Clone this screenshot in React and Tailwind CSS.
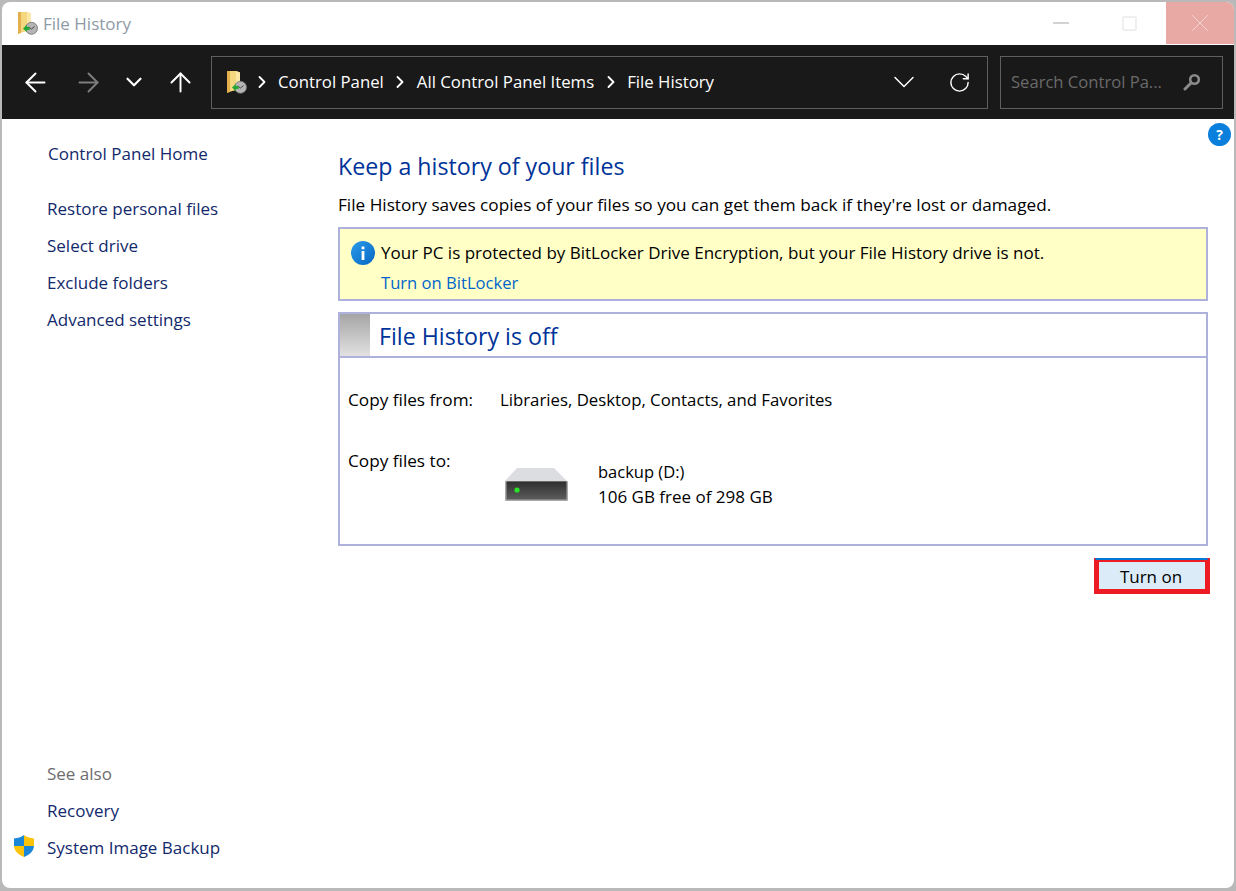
import { ArrowLeft, ArrowRight, ArrowUp, ChevronDown, ChevronRight, RotateCw, Minus, X } from "lucide-react"

const sidebarTasks = ["Restore personal files", "Select drive", "Exclude folders", "Advanced settings"]

function HistoryIcon({ className }) {
  return (
    <svg viewBox="0 0 20 23" className={className}>
      <path d="M0 0h9l4 1.500V18L0 21.500z" fill="#f5d77f" />
      <path d="M0 0h3v21l-3 1z" fill="#e3b04b" />
      <path d="M9 0l4 1.500V12H9z" fill="#fbe7a6" />
      <circle cx="13.500" cy="16.300" r="6" fill="#b4b4b4" stroke="#6e6e6e" strokeWidth="0.800" />
      <path d="M10.500 15l3 2 3-2.500" fill="none" stroke="#3a3a3a" strokeWidth="0.900" />
      <path d="M5 16.500l3.800-3.500v2h2.700v3H8.800v2z" fill="#22a834" />
    </svg>
  )
}

function InfoIcon() {
  return (
    <svg viewBox="0 0 24 24" className="h-6 w-6 shrink-0">
      <defs>
        <linearGradient id="infoBlue" x1="0" y1="0" x2="1" y2="1">
          <stop offset="0" stopColor="#2a9be8" />
          <stop offset="1" stopColor="#0667c4" />
        </linearGradient>
      </defs>
      <circle cx="12" cy="12" r="12" fill="url(#infoBlue)" />
      <rect x="10.600" y="10" width="2.800" height="9" fill="#fff" />
      <rect x="10.600" y="5.500" width="2.800" height="2.800" fill="#fff" />
    </svg>
  )
}

function DriveIcon() {
  return (
    <svg viewBox="0 0 63 33" className="h-[33px] w-[63px]">
      <defs>
        <linearGradient id="driveFace" x1="0" y1="0" x2="0" y2="1">
          <stop offset="0" stopColor="#2f2f2f" />
          <stop offset="1" stopColor="#5c5c5c" />
        </linearGradient>
      </defs>
      <path d="M12 0h37l13 13H0z" fill="#dcdde0" />
      <rect x="0" y="13" width="63" height="20" rx="1" fill="#a8a8a8" />
      <rect x="1.500" y="13.500" width="60" height="18" fill="url(#driveFace)" />
      <circle cx="12" cy="22" r="2.600" fill="#28e428" />
    </svg>
  )
}

function ShieldIcon() {
  return (
    <svg viewBox="0 0 24 24" className="h-6 w-6 shrink-0">
      <path d="M12 1c3 2.200 6 3.200 10 3.400V12H12z" fill="#fcc30b" />
      <path d="M12 1C9 3.200 6 4.200 2 4.400V12h10z" fill="#1a87d8" />
      <path d="M2 12c.4 5 4 8.800 10 11V12z" fill="#fcc30b" />
      <path d="M22 12c-.4 5-4 8.800-10 11V12z" fill="#1a87d8" />
    </svg>
  )
}

function SearchGlyph() {
  return (
    <svg viewBox="0 0 18 18" className="h-[18px] w-[18px]">
      <circle cx="11.500" cy="6.500" r="4.300" fill="none" stroke="#8a8a8a" strokeWidth="2.600" />
      <path d="M8 10l-6 6" stroke="#8a8a8a" strokeWidth="3" strokeLinecap="round" />
    </svg>
  )
}

function Sep() {
  return <ChevronRight className="mx-[6.500px] h-[20px] w-[20px] shrink-0" strokeWidth={2.200} />
}

export default function App() {
  return (
    <div
      className="h-[891px] w-[1236px] overflow-hidden bg-[#b9b9b9] pt-[2px] pr-[2px] pb-[3px] pl-[2px] text-[17px] text-black"
      style={{ fontFamily: '"Open Sans", "Noto Sans", "Liberation Sans", sans-serif' }}
    >
      <div className="flex h-full flex-col overflow-hidden rounded-[8px] bg-white">
        {/* title bar */}
        <div className="flex h-[43px] shrink-0 items-center">
          <HistoryIcon className="ml-[16px] h-[23px] w-[20px]" />
          <span className="ml-[5px] text-[17px] text-[#8f9aa6]">File History</span>
          <div className="ml-auto flex h-full items-start">
            <div className="flex h-[42px] w-[68px] items-center justify-center">
              <Minus className="h-[26px] w-[26px] text-[#a8a8a8]" strokeWidth={1} />
            </div>
            <div className="mr-[3px] flex h-[42px] w-[68px] items-center justify-center">
              <div className="h-[15px] w-[15px] rounded-[2px] border-2 border-[#efefef]" />
            </div>
            <div className="flex h-[42px] w-[68px] items-center justify-center bg-[#e8a8a4]">
              <X className="h-[30px] w-[30px] text-[#f4d5d2]" strokeWidth={0.800} />
            </div>
          </div>
        </div>

        {/* nav toolbar */}
        <div className="flex h-[74px] shrink-0 items-center bg-[#191919] pr-[11px] text-white">
          <ArrowLeft className="ml-[18px] h-[31px] w-[31px]" strokeWidth={1.500} />
          <ArrowRight className="ml-[22px] h-[31px] w-[31px] text-[#7d7d7d]" strokeWidth={1.500} />
          <ChevronDown className="ml-[17px] h-[26px] w-[26px]" strokeWidth={2} />
          <ArrowUp className="ml-[18px] h-[31px] w-[31px]" strokeWidth={1.500} />
          <div className="ml-[15px] flex h-[53px] w-[777px] items-center border border-[#5f5f5f] pl-[15px] pr-[16px]">
            <HistoryIcon className="h-[23px] w-[20px]" />
            <ChevronRight className="ml-[5px] mr-[6px] h-[20px] w-[20px] shrink-0" strokeWidth={2.200} />
            <span className="text-[16.800px]">Control Panel</span>
            <Sep />
            <span className="text-[16.800px]">All Control Panel Items</span>
            <Sep />
            <span className="text-[16.800px]">File History</span>
            <ChevronDown className="ml-auto h-[36px] w-[36px]" strokeWidth={1} />
            <RotateCw className="ml-[26px] h-[23px] w-[23px]" strokeWidth={1.500} />
          </div>
          <div className="ml-[12px] flex h-[53px] flex-1 items-center justify-between border border-[#5f5f5f] pl-[10px] pr-[21px]">
            <span className="text-[16.600px] text-[#6a6a6a]">Search Control Pa...</span>
            <SearchGlyph />
          </div>
        </div>

        {/* body */}
        <div className="relative flex min-h-0 flex-1">
          <button className="absolute right-[3px] top-[4px] flex h-[23px] w-[23px] items-center justify-center rounded-full bg-[#0a7fdb] text-[14px] font-bold leading-none text-white">
            ?
          </button>

          <aside className="flex w-[336px] shrink-0 flex-col justify-between pb-[28px] pl-[45px] pt-[22px] text-[#12296b]">
            <div>
              <div className="ml-[1px]">Control Panel Home</div>
              <ul className="mt-[29px] flex flex-col gap-[12px]">
                {sidebarTasks.map((task) => (
                  <li key={task} className="leading-[25px]">{task}</li>
                ))}
              </ul>
            </div>
            <div className="relative flex flex-col gap-[12px] leading-[25px]">
              <div className="text-[#6d6d6d]">See also</div>
              <div>Recovery</div>
              <div>System Image Backup</div>
              <div className="absolute -left-[35px] bottom-[2px]">
                <ShieldIcon />
              </div>
            </div>
          </aside>

          <main className="w-[870px] pt-[30px]">
            <h1 className="text-[23.200px] leading-[34px] text-[#003399]">Keep a history of your files</h1>
            <p className="mt-[8px] text-[17.200px] leading-[27px]">
              File History saves copies of your files so you can get them back if they're lost or damaged.
            </p>

            <div className="mt-[9px] h-[74px] border-2 border-[#aeb1dc] bg-[#ffffc6] pl-[11px] pt-[10px]">
              <div className="flex items-center gap-[6px] leading-[28px]">
                <InfoIcon />
                <span>Your PC is protected by BitLocker Drive Encryption, but your File History drive is not.</span>
              </div>
              <div className="ml-[30px] mt-[2px] text-[16.600px] leading-[28px] text-[#0066cc]">Turn on BitLocker</div>
            </div>

            <div className="mt-[11px] h-[234px] border-2 border-[#aeb1dc]">
              <div className="flex h-[44px] items-stretch border-b-2 border-[#aeb1dc]">
                <div className="w-[30px] bg-gradient-to-b from-[#a5a5a5] to-[#e2e2e2]" />
                <div className="ml-[9px] flex items-center pt-[3px] text-[23.200px] text-[#003399]">File History is off</div>
              </div>
              <div className="grid grid-cols-[152px_1fr] px-[8px] pt-[28px]">
                <div className="text-[17.200px] leading-[27px]">Copy files from:</div>
                <div className="text-[16.800px] leading-[27px]">Libraries, Desktop, Contacts, and Favorites</div>
                <div className="mt-[34px] text-[17.200px] leading-[27px]">Copy files to:</div>
                <div className="mt-[34px] flex items-start">
                  <div className="ml-[5px] mt-[21px]">
                    <DriveIcon />
                  </div>
                  <div className="ml-[30px] mt-[12px] leading-[25px]">
                    <div className="text-[16.500px]">backup (D:)</div>
                    <div>106 GB free of 298 GB</div>
                  </div>
                </div>
              </div>
            </div>

            <div className="relative ml-[756px] mt-[12px] w-[116px]">
              <div className="absolute left-[1px] right-[2px] top-0 h-[2px] rounded-t-[2px] bg-[#0078d7]" />
              <div className="mt-[2px] flex h-[36px] items-center justify-center border-[5px] border-t-4 border-[#ed1c24] bg-[#dcebf8] pr-[2px] pt-[1px] text-[17px] leading-none">
                Turn on
              </div>
            </div>
          </main>
        </div>
      </div>
    </div>
  )
}
